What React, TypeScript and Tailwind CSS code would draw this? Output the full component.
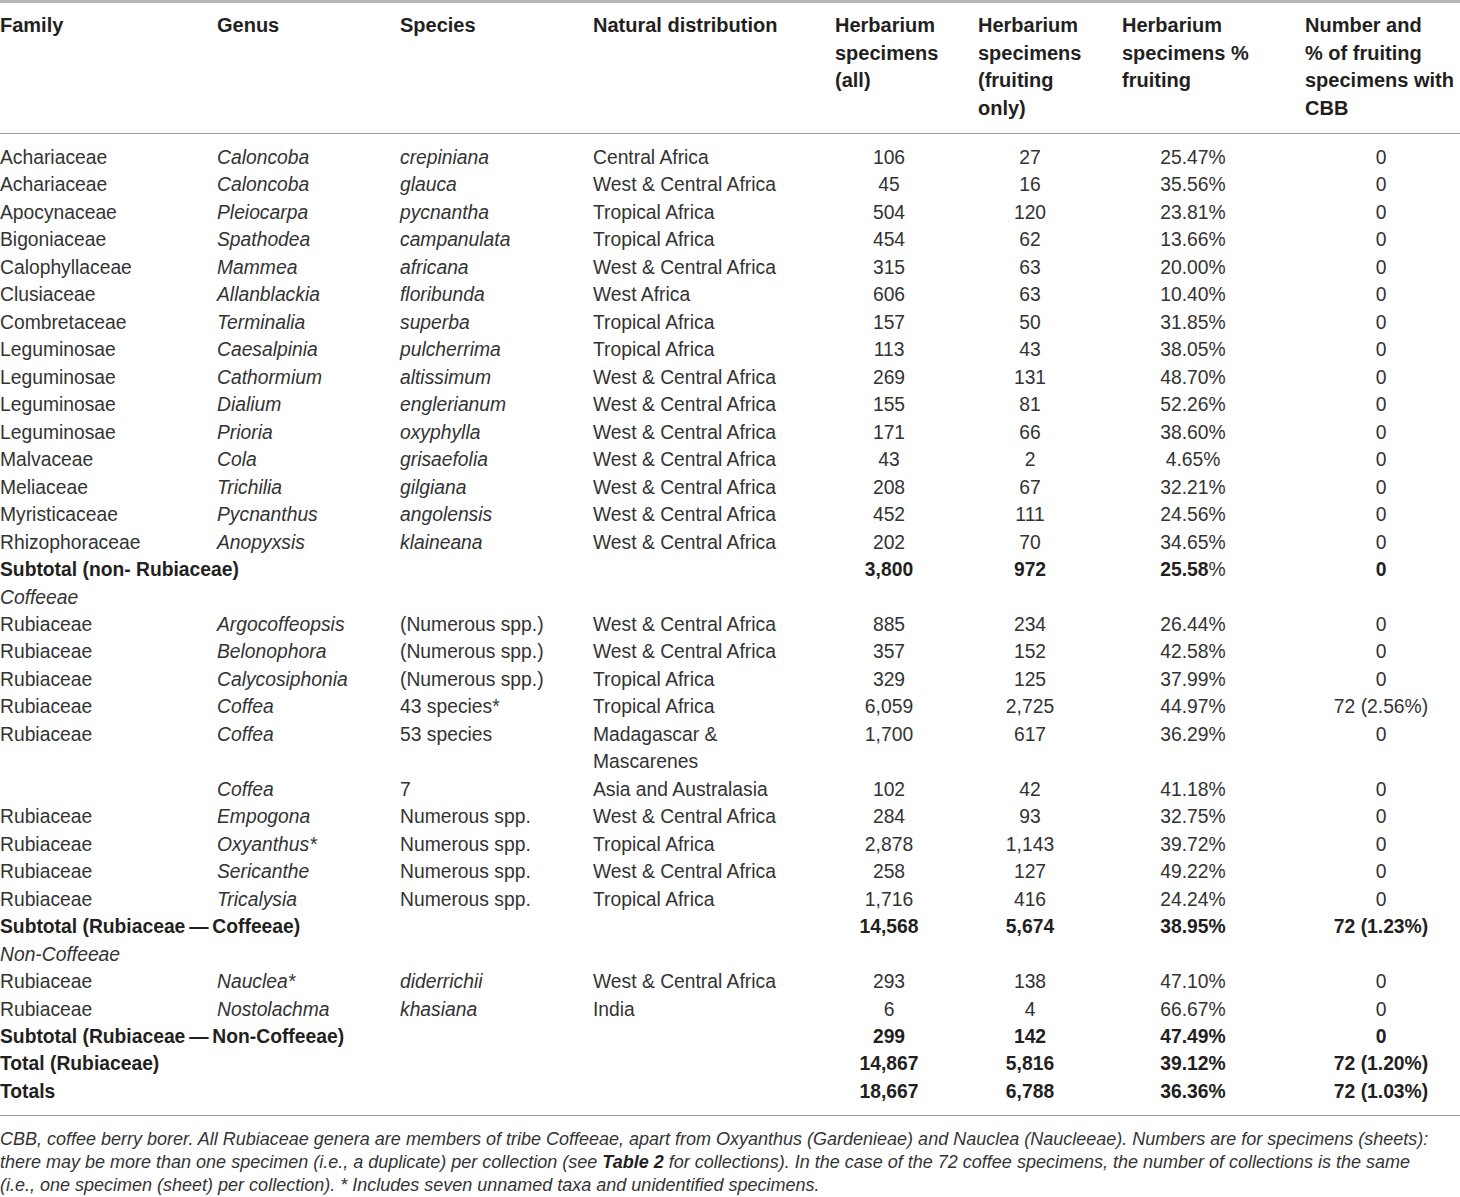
const COLS =
  "grid grid-cols-[217px_183px_193px_242px_143px_144px_183px_155px]";

type DataRow = {
  kind: "data";
  family: string;
  genus: string;
  species: string;
  italicSpecies?: boolean;
  dist: string;
  all: string;
  fruit: string;
  pct: string;
  cbb: string;
};
type TotalRow = {
  kind: "total";
  label: string;
  all: string;
  fruit: string;
  pct: string;
  pctSuffix?: string;
  cbb: string;
};
type GroupRow = { kind: "group"; label: string };
type Row = DataRow | TotalRow | GroupRow;

const WC = "West & Central Africa";
const TA = "Tropical Africa";

function d(
  family: string,
  genus: string,
  species: string,
  dist: string,
  all: string,
  fruit: string,
  pct: string,
  cbb = "0",
  italicSpecies = true
): DataRow {
  return { kind: "data", family, genus, species, dist, all, fruit, pct, cbb, italicSpecies };
}

const ROWS: Row[] = [
  d("Achariaceae", "Caloncoba", "crepiniana", "Central Africa", "106", "27", "25.47%"),
  d("Achariaceae", "Caloncoba", "glauca", WC, "45", "16", "35.56%"),
  d("Apocynaceae", "Pleiocarpa", "pycnantha", TA, "504", "120", "23.81%"),
  d("Bigoniaceae", "Spathodea", "campanulata", TA, "454", "62", "13.66%"),
  d("Calophyllaceae", "Mammea", "africana", WC, "315", "63", "20.00%"),
  d("Clusiaceae", "Allanblackia", "floribunda", "West Africa", "606", "63", "10.40%"),
  d("Combretaceae", "Terminalia", "superba", TA, "157", "50", "31.85%"),
  d("Leguminosae", "Caesalpinia", "pulcherrima", TA, "113", "43", "38.05%"),
  d("Leguminosae", "Cathormium", "altissimum", WC, "269", "131", "48.70%"),
  d("Leguminosae", "Dialium", "englerianum", WC, "155", "81", "52.26%"),
  d("Leguminosae", "Prioria", "oxyphylla", WC, "171", "66", "38.60%"),
  d("Malvaceae", "Cola", "grisaefolia", WC, "43", "2", "4.65%"),
  d("Meliaceae", "Trichilia", "gilgiana", WC, "208", "67", "32.21%"),
  d("Myristicaceae", "Pycnanthus", "angolensis", WC, "452", "111", "24.56%"),
  d("Rhizophoraceae", "Anopyxsis", "klaineana", WC, "202", "70", "34.65%"),
  { kind: "total", label: "Subtotal (non- Rubiaceae)", all: "3,800", fruit: "972", pct: "25.58", pctSuffix: "%", cbb: "0" },
  { kind: "group", label: "Coffeeae" },
  d("Rubiaceae", "Argocoffeopsis", "(Numerous spp.)", WC, "885", "234", "26.44%", "0", false),
  d("Rubiaceae", "Belonophora", "(Numerous spp.)", WC, "357", "152", "42.58%", "0", false),
  d("Rubiaceae", "Calycosiphonia", "(Numerous spp.)", TA, "329", "125", "37.99%", "0", false),
  d("Rubiaceae", "Coffea", "43 species*", TA, "6,059", "2,725", "44.97%", "72 (2.56%)", false),
  d("Rubiaceae", "Coffea", "53 species", "Madagascar &\nMascarenes", "1,700", "617", "36.29%", "0", false),
  d("", "Coffea", "7", "Asia and Australasia", "102", "42", "41.18%", "0", false),
  d("Rubiaceae", "Empogona", "Numerous spp.", WC, "284", "93", "32.75%", "0", false),
  d("Rubiaceae", "Oxyanthus*", "Numerous spp.", TA, "2,878", "1,143", "39.72%", "0", false),
  d("Rubiaceae", "Sericanthe", "Numerous spp.", WC, "258", "127", "49.22%", "0", false),
  d("Rubiaceae", "Tricalysia", "Numerous spp.", TA, "1,716", "416", "24.24%", "0", false),
  { kind: "total", label: "Subtotal (Rubiaceae\u2009\u2014\u2009Coffeeae)", all: "14,568", fruit: "5,674", pct: "38.95%", cbb: "72 (1.23%)" },
  { kind: "group", label: "Non-Coffeeae" },
  d("Rubiaceae", "Nauclea*", "diderrichii", WC, "293", "138", "47.10%"),
  d("Rubiaceae", "Nostolachma", "khasiana", "India", "6", "4", "66.67%"),
  { kind: "total", label: "Subtotal (Rubiaceae\u2009\u2014\u2009Non-Coffeeae)", all: "299", fruit: "142", pct: "47.49%", cbb: "0" },
  { kind: "total", label: "Total (Rubiaceae)", all: "14,867", fruit: "5,816", pct: "39.12%", cbb: "72 (1.20%)" },
  { kind: "total", label: "Totals", all: "18,667", fruit: "6,788", pct: "36.36%", cbb: "72 (1.03%)" },
];

function Nums({ all, fruit, pct, cbb }: { all: React.ReactNode; fruit: React.ReactNode; pct: React.ReactNode; cbb: React.ReactNode }) {
  return (
    <>
      <div>
        <div className="w-[108px] text-center">{all}</div>
      </div>
      <div>
        <div className="w-[104px] text-center">{fruit}</div>
      </div>
      <div>
        <div className="w-[142px] text-center">{pct}</div>
      </div>
      <div>
        <div className="w-[152px] text-center">{cbb}</div>
      </div>
    </>
  );
}

function TableRow({ row }: { row: Row }) {
  if (row.kind === "group") {
    return (
      <div className={COLS}>
        <div className="col-span-4 italic">{row.label}</div>
      </div>
    );
  }
  if (row.kind === "total") {
    return (
      <div className={`${COLS} font-bold text-[#231f20]`}>
        <div className="col-span-4 whitespace-nowrap">{row.label}</div>
        <Nums
          all={row.all}
          fruit={row.fruit}
          pct={
            <>
              {row.pct}
              {row.pctSuffix ? <span className="font-normal text-[#333]">{row.pctSuffix}</span> : null}
            </>
          }
          cbb={row.cbb}
        />
      </div>
    );
  }
  return (
    <div className={COLS}>
      <div>{row.family}</div>
      <div className="italic">{row.genus}</div>
      <div className={row.italicSpecies ? "italic" : ""}>{row.species}</div>
      <div className="whitespace-pre-line">{row.dist}</div>
      <Nums all={row.all} fruit={row.fruit} pct={row.pct} cbb={row.cbb} />
    </div>
  );
}

export default function App() {
  return (
    <div className="w-[1460px] bg-white font-['Liberation_Sans',Arial,sans-serif] text-[#333]">
      <div className="border-t-[3px] border-[#b5b5b5]">
        {/* Header */}
        <div className={`${COLS} border-b border-[#9a9a9a] pb-[11px] pt-[9px] text-[20px] font-bold leading-[27.5px] text-[#231f20]`}>
          <div>Family</div>
          <div>Genus</div>
          <div>Species</div>
          <div>Natural distribution</div>
          <div>
            Herbarium
            <br />
            specimens
            <br />
            (all)
          </div>
          <div>
            Herbarium
            <br />
            specimens
            <br />
            (fruiting
            <br />
            only)
          </div>
          <div>
            Herbarium
            <br />
            specimens %
            <br />
            fruiting
          </div>
          <div>
            Number and
            <br />% of fruiting
            <br />
            specimens with
            <br />
            CBB
          </div>
        </div>

        {/* Body */}
        <div className="border-b border-[#9a9a9a] pb-[10px] pt-[10px] text-[19.3px] leading-[27.47px]">
          {ROWS.map((row, i) => (
            <TableRow key={i} row={row} />
          ))}
        </div>

        {/* Footnote */}
        <p className="pt-[12px] text-[18px] italic leading-[23px]">
          CBB, coffee berry borer. All Rubiaceae genera are members of tribe Coffeeae, apart from Oxyanthus (Gardenieae) and Nauclea (Naucleeae). Numbers are for specimens (sheets):
          <br />
          there may be more than one specimen (i.e., a duplicate) per collection (see <b className="text-[#231f20]">Table 2</b> for collections). In the case of the 72 coffee specimens, the number of collections is the same
          <br />
          (i.e., one specimen (sheet) per collection). * Includes seven unnamed taxa and unidentified specimens.
        </p>
      </div>
    </div>
  );
}
